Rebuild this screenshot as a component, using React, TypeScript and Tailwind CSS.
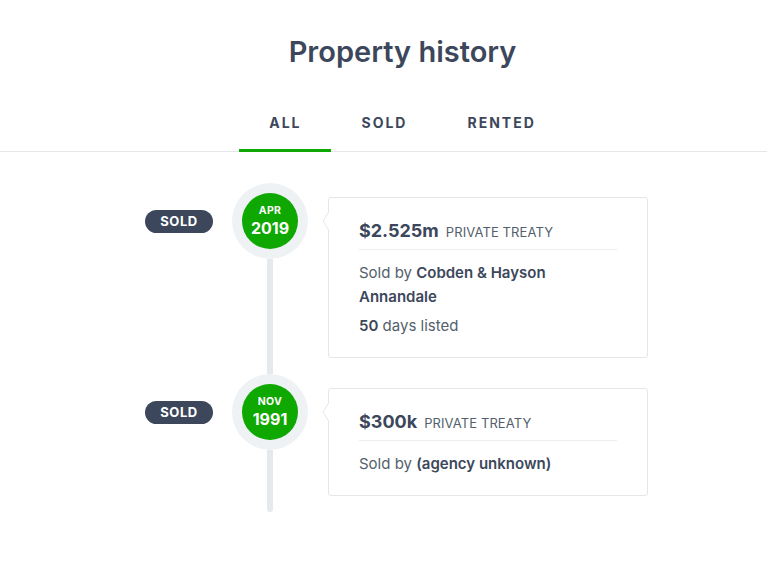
import React from "react";

type Entry = {
  month: string;
  year: string;
  price: string;
  method: string;
  agency: string;
  days?: string;
};

const entries: Entry[] = [
  { month: "APR", year: "2019", price: "$2.525m", method: "PRIVATE TREATY", agency: "Cobden & Hayson Annandale", days: "50" },
  { month: "NOV", year: "1991", price: "$300k", method: "PRIVATE TREATY", agency: "(agency unknown)" },
];

function Row({ e, last }: { e: Entry; last: boolean }) {
  return (
    <div className="flex items-stretch">
      <div className="w-[94px] flex justify-end items-start pt-[27px]">
        <span className="h-[23px] w-[68px] rounded-full bg-[#3c475b] text-white text-[13px] font-bold tracking-[0.5px] flex items-center justify-center">
          SOLD
        </span>
      </div>
      <div className="ml-[19px] w-[76px] flex flex-col items-center">
        <div className="w-[76px] h-[76px] rounded-full bg-[#eff2f5] flex items-center justify-center shrink-0">
          <div className="w-[56px] h-[56px] rounded-full bg-[#0ea800] text-white flex flex-col items-center justify-center leading-none">
            <span className="text-[10.5px] font-bold tracking-[0.3px]">{e.month}</span>
            <span className="text-[16px] font-bold mt-[3px]">{e.year}</span>
          </div>
        </div>
        <div className={"w-[6px] flex-1 bg-[#e5e8ec] " + (last ? "rounded-b-full" : "")} />
      </div>
      <div className="ml-[20px] pt-[14px] pb-[16px]">
        <div className="relative w-[320px] border border-[#e4e6ea] rounded-[3px] bg-white px-[30px] pt-[19px] pb-[19px]">
          <svg className="absolute left-[-7px] top-[12px]" width="8" height="22" viewBox="0 0 8 22">
            <path d="M7.5 0.5 L1 11 L7.5 21.5" fill="#ffffff" stroke="#e4e6ea" strokeWidth="1" />
            <rect x="7" y="0" width="2" height="22" fill="#ffffff" />
          </svg>
          <div className="flex items-baseline h-[28px] leading-[28px]">
            <span className="text-[18px] font-bold text-[#3c475b]">{e.price}</span>
            <span className="ml-[7px] text-[13px] tracking-[0.1px] text-[#535f6c]">{e.method}</span>
          </div>
          <div className="h-px bg-[#eceef1] mt-[4px] mb-[11px]" />
          <div className="text-[15px] leading-[24px] text-[#535f6c]">
            Sold by <span className="font-semibold text-[#3c475b]">{e.agency}</span>
          </div>
          {e.days && (
            <div className="mt-[5px] text-[15px] leading-[24px] text-[#535f6c]">
              <span className="font-semibold text-[#3c475b]">{e.days}</span> days listed
            </div>
          )}
        </div>
      </div>
    </div>
  );
}

export default function App() {
  return (
    <div className="w-[767px] h-[568px] bg-white overflow-hidden" style={{ fontFamily: "Inter, 'Liberation Sans', sans-serif" }}>
      <div className="pl-[38px] flex flex-col items-center">
        <h1 className="mt-[34px] text-[29px] leading-[36px] font-semibold text-[#3c475b] tracking-[0px]">Property history</h1>
      </div>
      <div className="mt-[40px] border-b border-[#e4e6ea]">
        <div className="pl-[38px] flex justify-center">
          <div className="flex">
            {["ALL", "SOLD", "RENTED"].map((t, i) => (
              <div key={t} className="relative px-[30px] h-[41px] pt-[3px] flex items-start">
                <span className="text-[14px] leading-[20px] font-bold tracking-[2px] text-[#3c475b]">{t}</span>
                {i === 0 && <div className="absolute left-0 right-0 bottom-[-1px] h-[3px] bg-[#0ea800]" />}
              </div>
            ))}
          </div>
        </div>
      </div>
      <div className="mt-[31px] flex justify-center">
        <div className="flex flex-col">
          {entries.map((e, i) => (
            <Row key={i} e={e} last={i === entries.length - 1} />
          ))}
        </div>
      </div>
    </div>
  );
}
